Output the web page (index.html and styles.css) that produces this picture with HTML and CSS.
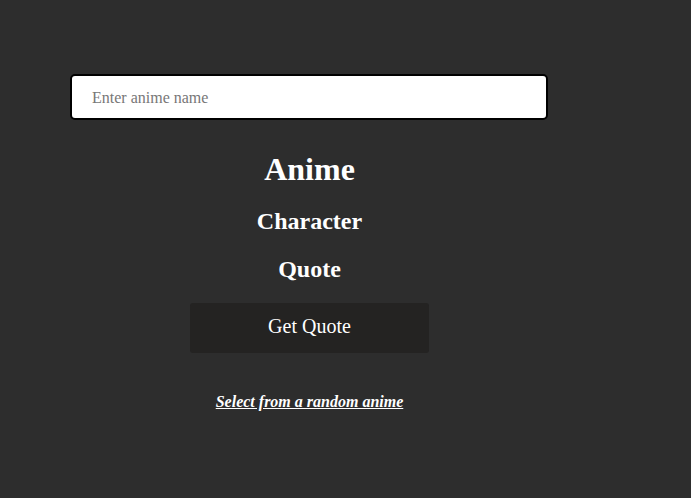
FILE: index.html
```html
<!DOCTYPE html>
<html lang="en">
<head>
  <meta charset="UTF-8" />
  <meta name="viewport" content="width=device-width, initial-scale=1.0"/>
  <title>Anime Quotes</title>
  <link rel="stylesheet" href="styles.css">
</head>
<body>

<div class="container">
  <input type="text" class="search" id="anime" placeholder="Enter anime name">

  <h1 class="anime" id="animeName">Anime</h1>
  <h2 class="character" id="character">Character</h2>
  <h2 class="quote" id="quote">Quote</h2>

  <button class="get-quote" onclick="getQuote()">Get Quote</button>

  <a href="#" class="random-link">Select from a random anime</a>
</div>

<script>
function getQuote() {
    const name = document.getElementById('anime').value;
    if (name) document.getElementById('animeName').innerText = name;
}
</script>

</body>
</html>
```

FILE: styles.css
```css
html, body {
    margin: 0;
    padding: 0;
    height: 100%;
    background: #2d2d2d;
    font-family: 'Liberation Serif', 'Times New Roman', serif;
    color: white;
}

.container {
    width: 479px;
    margin-left: 70px;
    padding-top: 74px;
    display: flex;
    flex-direction: column;
    align-items: center;
}

.search {
    width: 478px;
    align-self: flex-start;
    height: 46px;
    box-sizing: border-box;
    border: 2px solid #000;
    border-radius: 5px;
    padding: 1px 20px 0 20px;
    font-family: inherit;
    font-size: 16px;
    color: #333;
    background: white;
    outline: none;
}
.search::placeholder {
    color: #777;
}

.anime {
    font-size: 32px;
    margin: 31px 0 0 0;
}
.character {
    font-size: 24px;
    margin: 20px 0 0 0;
}
.quote {
    font-size: 24px;
    margin: 21px 0 0 0;
}

.get-quote {
    width: 239px;
    height: 50px;
    margin-top: 20px;
    padding: 0 0 3px 0;
    background: #242322;
    border: none;
    border-radius: 3px;
    color: white;
    font-family: inherit;
    font-size: 20px;
    cursor: pointer;
}

.random-link {
    margin-top: 40px;
    color: white;
    font-size: 16px;
    font-weight: bold;
    font-style: italic;
    text-decoration: underline;
}
```
